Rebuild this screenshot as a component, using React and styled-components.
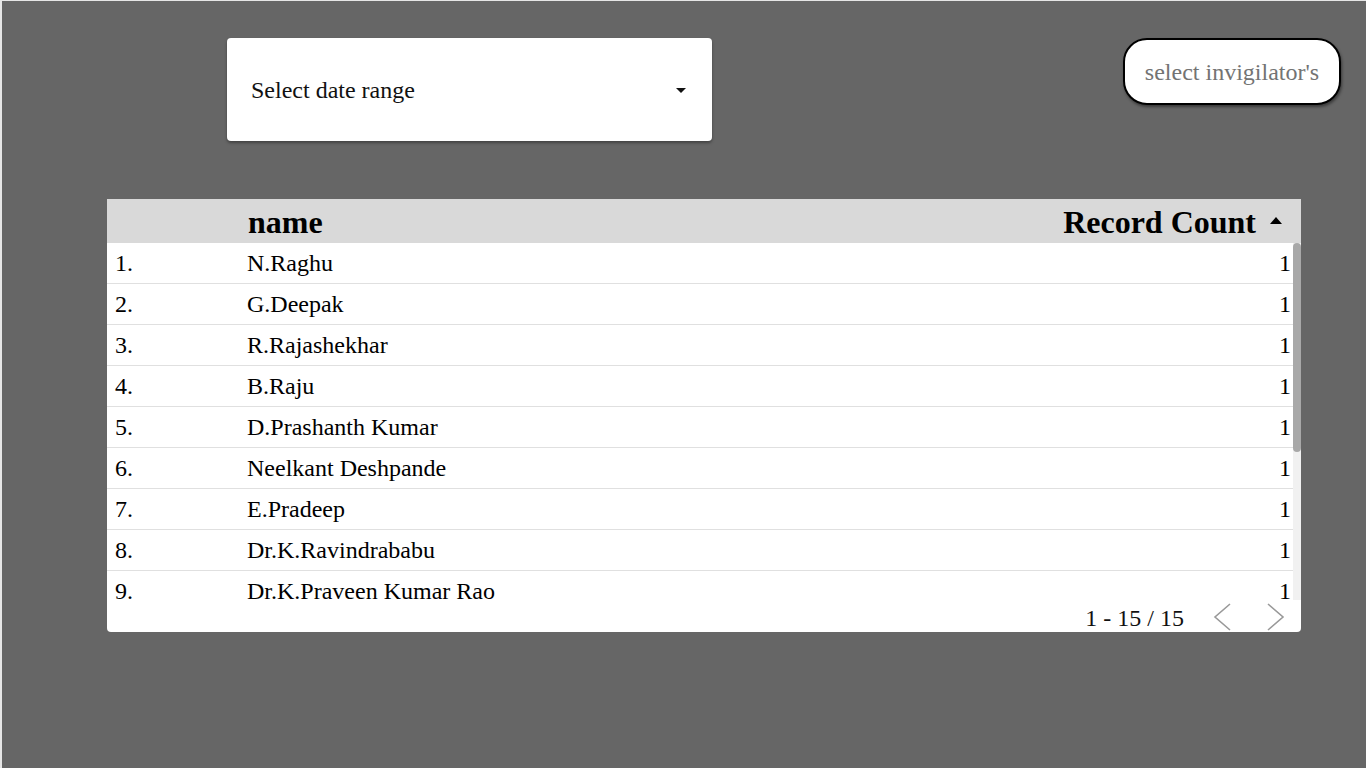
import styled, { createGlobalStyle } from "styled-components";

const GlobalStyle = createGlobalStyle`
  html, body {
    margin: 0;
    padding: 0;
    background: #666666;
  }
  body {
    font-family: "Liberation Serif", "Times New Roman", serif;
  }
`;

const Page = styled.div`
  width: 1366px;
  height: 768px;
  box-sizing: border-box;
  background: #666666;
  border-top: 1px solid #e6e6e6;
  border-left: 2px solid #e6e6e6;
  overflow: hidden;
`;

const TopBar = styled.div`
  display: flex;
  justify-content: space-between;
  align-items: flex-start;
  padding: 37px 25px 0 225px;
`;

const DateSelect = styled.div`
  width: 485px;
  height: 103px;
  box-sizing: border-box;
  background: #fff;
  border-radius: 4px;
  box-shadow: 0 2px 3px rgba(0, 0, 0, 0.35);
  display: flex;
  align-items: center;
  justify-content: space-between;
  padding: 2px 26px 0 24px;
  font-size: 24px;
  color: #111;
  cursor: pointer;
`;

const Caret = styled.span`
  width: 0;
  height: 0;
  border-left: 5px solid transparent;
  border-right: 5px solid transparent;
  border-top: 5px solid #111;
`;

const PillButton = styled.button`
  width: 218px;
  height: 67px;
  box-sizing: border-box;
  background: #fff;
  border: 2px solid #000;
  border-radius: 24px;
  box-shadow: 1px 2px 3px rgba(0, 0, 0, 0.45);
  font-family: "Liberation Serif", "Times New Roman", serif;
  font-size: 24px;
  color: #737373;
  padding: 2px 0 0;
  cursor: pointer;
`;

const TableCard = styled.div`
  margin: 58px 0 0 105px;
  width: 1194px;
  height: 433px;
  background: #fff;
  border-radius: 0 0 4px 4px;
  display: flex;
  flex-direction: column;
  overflow: hidden;
`;

const HeaderRow = styled.div`
  display: grid;
  grid-template-columns: 141px 1fr auto;
  align-items: center;
  height: 44px;
  background: #d9d9d9;
  font-size: 32px;
  font-weight: 700;
  color: #000;
  padding: 2px 19px 0 0;
  box-sizing: border-box;
`;

const SortHead = styled.div`
  display: flex;
  align-items: center;
  gap: 14px;
`;

const SortArrow = styled.span`
  width: 0;
  height: 0;
  border-left: 6px solid transparent;
  border-right: 6px solid transparent;
  border-bottom: 7px solid #000;
  margin-bottom: 4px;
`;

const Body = styled.div`
  height: 357px;
  display: flex;
`;

const List = styled.div`
  flex: 1;
  overflow: hidden;
`;

const ScrollTrack = styled.div`
  width: 8px;
  background: #f1f1f1;
`;

const ScrollThumb = styled.div`
  height: 209px;
  background: #a8a8a8;
  border-radius: 4px;
`;

const Row = styled.div`
  display: grid;
  grid-template-columns: 132px 1fr auto;
  align-items: center;
  height: 41px;
  box-sizing: border-box;
  border-bottom: 1px solid #e0e0e0;
  font-size: 24px;
  color: #000;
  padding: 0 2px 0 8px;
`;

const Footer = styled.div`
  display: flex;
  align-items: center;
  justify-content: flex-end;
  height: 32px;
  font-size: 24px;
  color: #111;
  padding-right: 15px;
`;

const PageInfo = styled.span`
  margin-right: 28px;
  line-height: 32px;
  padding-top: 4px;
`;

const NavButton = styled.span`
  display: flex;
  width: 20px;
  height: 32px;
  margin-left: ${(p) => (p.$gap ? "34px" : "0")};
  padding-top: 4px;
`;

const Chevron = ({ dir }) => (
  <svg width="20" height="30" viewBox="0 0 20 30">
    <polyline
      points={dir === "left" ? "18,2 3,15 18,28" : "2,2 17,15 2,28"}
      fill="none"
      stroke="#999"
      strokeWidth="1.6"
    />
  </svg>
);

const people = [
  "N.Raghu",
  "G.Deepak",
  "R.Rajashekhar",
  "B.Raju",
  "D.Prashanth Kumar",
  "Neelkant Deshpande",
  "E.Pradeep",
  "Dr.K.Ravindrababu",
  "Dr.K.Praveen Kumar Rao",
  "S.Srinivas",
  "M.Venkatesh",
  "P.Suresh",
  "K.Mahesh",
  "A.Ramesh",
  "T.Naresh",
];

export default function App() {
  return (
    <Page>
      <GlobalStyle />
      <TopBar>
        <DateSelect>
          <span>Select date range</span>
          <Caret />
        </DateSelect>
        <PillButton>select invigilator's</PillButton>
      </TopBar>

      <TableCard>
        <HeaderRow>
          <span />
          <span>name</span>
          <SortHead>
            <span>Record Count</span>
            <SortArrow />
          </SortHead>
        </HeaderRow>
        <Body>
          <List>
            {people.map((name, i) => (
              <Row key={name}>
                <span>{i + 1}.</span>
                <span>{name}</span>
                <span>1</span>
              </Row>
            ))}
          </List>
          <ScrollTrack>
            <ScrollThumb />
          </ScrollTrack>
        </Body>
        <Footer>
          <PageInfo>1 - 15 / 15</PageInfo>
          <NavButton>
            <Chevron dir="left" />
          </NavButton>
          <NavButton $gap>
            <Chevron dir="right" />
          </NavButton>
        </Footer>
      </TableCard>
    </Page>
  );
}
